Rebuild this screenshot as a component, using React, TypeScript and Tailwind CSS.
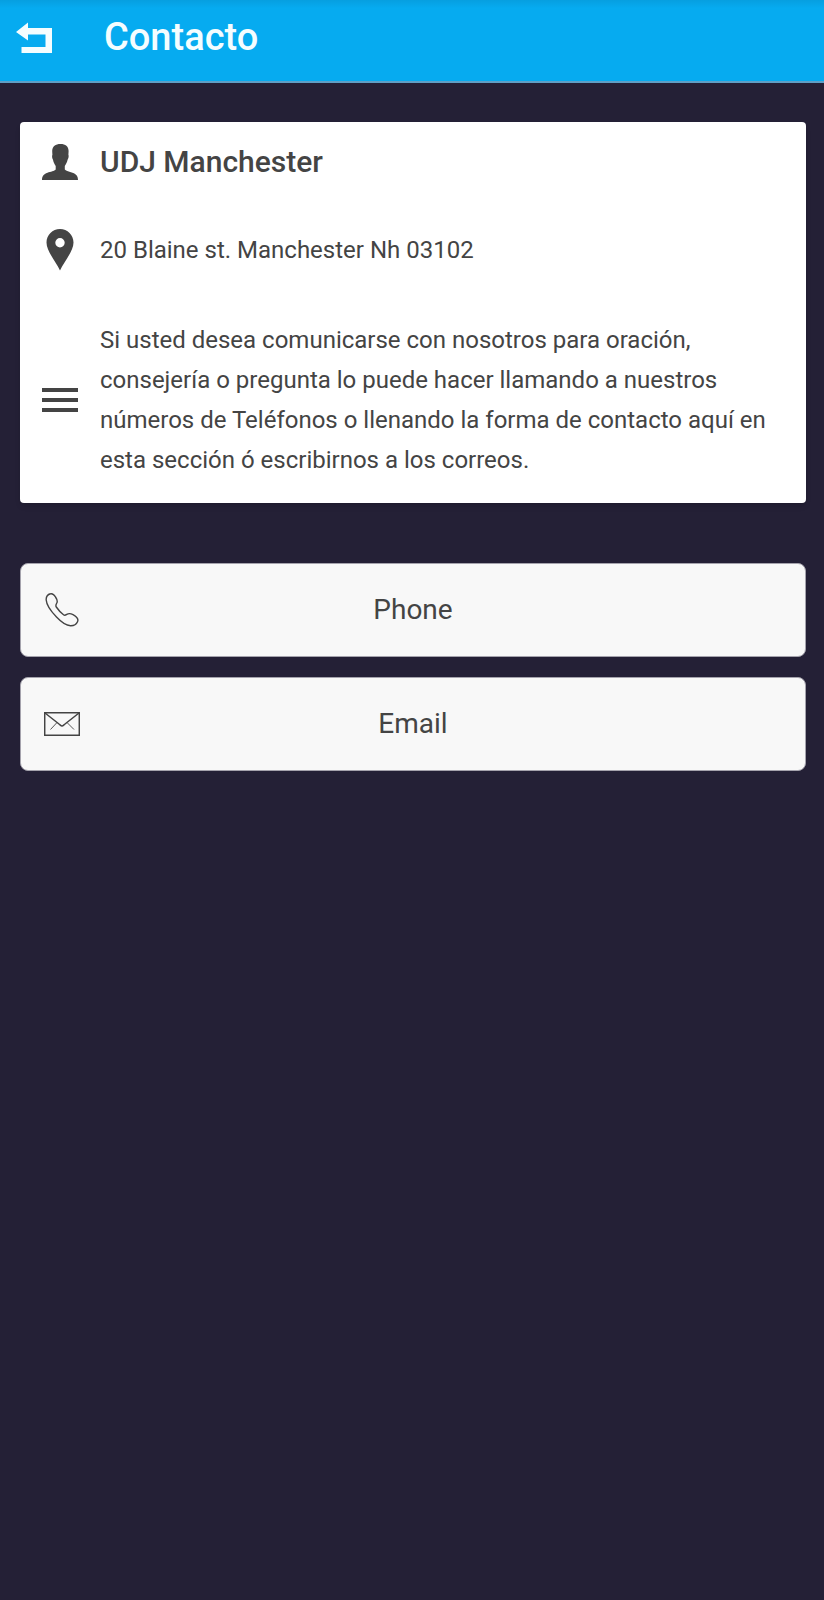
import React from 'react';

interface InfoRowProps {
    icon: React.ReactNode;
    className: string;
    children: React.ReactNode;
}

const BackIcon = () => (
    <svg className="h-8 w-9" viewBox="0 0 36 32" fill="#f4fdff" aria-hidden="true">
        <path d="M0 10 L12 0.5 V6 H36 V31 H5.5 V25 H29.5 V12.5 H12 V18.5 Z" />
    </svg>
);

const PersonIcon = () => (
    <svg className="h-9 w-9" viewBox="0 0 36 36" fill="currentColor" aria-hidden="true">
        <path d="M18.500 0 C23.500 0 26.600 2.500 26.600 7 C26.600 8.500 26.400 9.500 26.400 10.800 C27 12 26.500 14.500 25.600 15.800 C25 18.500 23.800 20.500 22.800 22 V25.500 C24 27.200 27.500 27.600 30.500 28.700 C34.500 30.200 36 32 36 36 H0 C0 32 1.500 30.200 5.500 28.700 C8.500 27.600 12.500 27.200 13.700 25.500 V22 C12.700 20.500 11.500 18.500 11 15.800 C10.100 14.500 9.800 12 10.400 10.800 C10.400 9.500 10.200 8.500 10.200 7 C10.200 2.500 13.500 0 18.500 0 Z" />
    </svg>
);

const PinIcon = () => (
    <svg className="h-[42px] w-9" viewBox="0 0 36 42" fill="currentColor" aria-hidden="true">
        <path
            fillRule="evenodd"
            d="M18 0 C25.500 0 31.500 6 31.500 13.500 C31.500 22 22 33 18 41.500 C14 33 4.500 22 4.500 13.500 C4.500 6 10.500 0 18 0 Z M18 9 a4.700 4.700 0 1 0 0 9.400 a4.700 4.700 0 1 0 0 -9.400 Z"
        />
    </svg>
);

const LinesIcon = () => (
    <svg className="h-6 w-9" viewBox="0 0 36 24" fill="currentColor" aria-hidden="true">
        <path d="M0 0 H36 V4 H0 Z M0 10 H36 V14 H0 Z M0 20 H36 V24 H0 Z" />
    </svg>
);

const PhoneIcon = () => (
    <svg
        className="h-9 w-9"
        viewBox="0 0 36 36"
        fill="none"
        stroke="currentColor"
        strokeWidth="1.400"
        strokeLinejoin="round"
        aria-hidden="true"
    >
        <path d="M6.500 1.800 C8.500 1.200 10 2.500 11.500 5 C13.500 8 13.800 9.300 12.800 11 C11.600 13 11.300 13.500 12.300 15 C14 17.500 17 21 19.800 23 C20.800 23.600 21.500 23.200 22.800 22.300 C24.800 21.200 26.500 21.300 29 22.600 C33 24.800 34.800 27 33.500 29.700 C32.300 32.500 29.500 33.800 26.500 33.700 C22 33.500 17 29.800 12.500 25 C7 19.300 2.500 12.500 2.200 8 C2 5 3.500 2.600 6.500 1.800 Z" />
    </svg>
);

const MailIcon = () => (
    <svg
        className="h-6 w-9"
        viewBox="0 0 36 24"
        fill="none"
        stroke="currentColor"
        aria-hidden="true"
    >
        <path strokeWidth="1.500" d="M0.700 0.700 H35.300 V23.300 H0.700 Z" />
        <path strokeWidth="1.500" d="M1 1 L15 12 C16.500 13.200 17 14 18 14 C19 14 19.500 13.200 21 12 L35 1" />
        <path strokeWidth="0.900" d="M13 10.500 L6.500 17.500 M23 10.500 L30 17.500" />
    </svg>
);

const InfoRow: React.FC<InfoRowProps> = ({ icon, className, children }) => (
    <div className={`flex items-center gap-[22px] px-[22px] ${className}`}>
        <span className="shrink-0">{icon}</span>
        {children}
    </div>
);

const actions = [
    { label: 'Phone', icon: <PhoneIcon /> },
    { label: 'Email', icon: <MailIcon /> },
];

const App: React.FC = () => {
    return (
        <div className="min-h-screen bg-[#242036] font-[Roboto,sans-serif] text-[#444444]">
            {/* Top bar */}
            <header className="flex items-center gap-[52px] border-b-2 border-[#5f9fc6] bg-[#06abf0] bg-linear-to-b from-[#069fe0] to-[#06abf0] to-10% px-4 pt-[15px] pb-[21px]">
                <button type="button" aria-label="Volver">
                    <BackIcon />
                </button>
                <h1 className="text-[38px] leading-[45px] font-medium text-[#f4fdff]">Contacto</h1>
            </header>

            <main className="pt-[39px] pr-[18px] pl-5">
                {/* Contact info */}
                <section className="rounded bg-white shadow-md">
                    <InfoRow icon={<PersonIcon />} className="h-20">
                        <h2 className="text-[30px] leading-10 font-medium">UDJ Manchester</h2>
                    </InfoRow>
                    <InfoRow icon={<PinIcon />} className="h-24">
                        <p className="text-2xl leading-10">20 Blaine st. Manchester Nh 03102</p>
                    </InfoRow>
                    <InfoRow icon={<LinesIcon />} className="pt-[22px] pb-[23px]">
                        <p className="text-2xl leading-10">
                            Si usted desea comunicarse con nosotros para oración, consejería o pregunta lo
                            puede hacer llamando a nuestros números de Teléfonos o llenando la forma de
                            contacto aquí en esta sección ó escribirnos a los correos.
                        </p>
                    </InfoRow>
                </section>

                {/* Actions */}
                <div className="mt-[60px] flex flex-col gap-5">
                    {actions.map(({ label, icon }) => (
                        <button
                            key={label}
                            type="button"
                            className="flex items-center rounded-lg border border-[#a5a3ad] bg-[#f8f8f8] px-[23px] py-6 text-[28px] leading-[44px]"
                        >
                            {icon}
                            <span className="flex-1 pr-9 text-center">{label}</span>
                        </button>
                    ))}
                </div>
            </main>
        </div>
    );
};

export default App;
